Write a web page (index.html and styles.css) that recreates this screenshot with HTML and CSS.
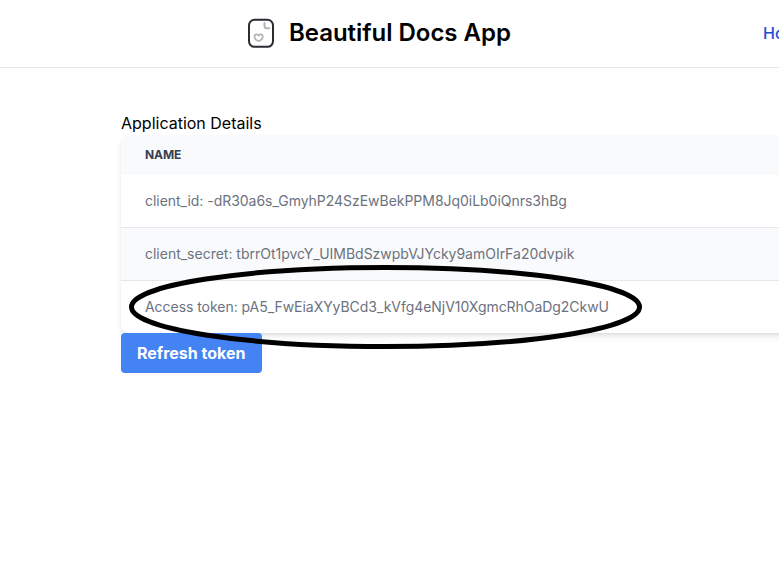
FILE: index.html
```html
<!DOCTYPE html>
<html lang="en">
<head>
<meta charset="utf-8">
<title>Beautiful Docs App</title>
<link rel="stylesheet" href="styles.css">
</head>
<body>
<header class="header">
  <a class="brand">
    <svg class="logo" viewBox="0 0 28 30" fill="none" stroke-linecap="round" stroke-linejoin="round">
      <rect x="2" y="1.800" width="24" height="27" rx="5.500" stroke="#292d32" stroke-width="2"/>
      <path d="M17.500 5v2.700c0 1.600.9 2.500 2.500 2.500h2.200" stroke="#b4b5b7" stroke-width="2"/>
      <path d="M11.600 23.200c-1.800-.7-4.100-2.300-4.100-4.500 0-1.400.9-2.300 2-2.300.9 0 1.600.4 2.100 1.100.5-.7 1.200-1.100 2.100-1.100 1.100 0 2 .9 2 2.300 0 2.200-2.300 3.800-4.100 4.500z" stroke="#b4b5b7" stroke-width="1.800"/>
    </svg>
    <span class="brand-name">Beautiful Docs App</span>
  </a>
  <nav class="nav"><a class="nav-link">Home</a></nav>
</header>
<main class="content">
  <div class="title">Application Details</div>
  <table class="details">
    <thead><tr><th>Name</th></tr></thead>
    <tbody>
      <tr><td><span class="t-id">client_id: -dR30a6s_GmyhP24SzEwBekPPM8Jq0iLb0iQnrs3hBg</span></td></tr>
      <tr><td><span class="t-secret">client_secret: tbrrOt1pvcY_UIMBdSzwpbVJYcky9amOIrFa20dvpik</span></td></tr>
      <tr><td><span class="t-token">Access token: pA5_FwEiaXYyBCd3_kVfg4eNjV10XgmcRhOaDg2CkwU</span></td></tr>
    </tbody>
  </table>
  <button class="refresh">Refresh token</button>
  <svg class="highlight" viewBox="0 0 516 88" fill="none">
    <ellipse cx="257.500" cy="44" rx="254" ry="39.500" stroke="#000" stroke-width="5"/>
  </svg>
</main>
</body>
</html>
```
FILE: styles.css
```css
* { box-sizing: border-box; }
html { overflow: hidden; }
body {
  margin: 0;
  height: 572px;
  overflow: hidden;
  background: #fff;
  color: #000;
  font: 16px/24px Inter, "Liberation Sans", sans-serif;
}
.header {
  display: flex;
  align-items: center;
  justify-content: space-between;
  height: 68px;
  width: 812px;
  padding: 0 0 2px 247px;
  border-bottom: 1px solid #e5e7eb;
}
.brand { display: flex; align-items: center; gap: 14px; }
.logo { width: 28px; height: 30px; }
.brand-name { font-size: 24px; line-height: 32px; font-weight: 600; letter-spacing: -0.03px; white-space: nowrap; }
.nav { width: 49px; }
.nav-link { color: #1d4ed8; font-weight: 500; }
.content {
  position: relative;
  width: 900px;
  padding: 43px 0 0 121px;
}
.title { line-height: 24px; }
.details {
  width: 100%;
  border-spacing: 0;
  border-radius: 8px;
  overflow: hidden;
  background: #fff;
  text-align: left;
  font-size: 14px;
  line-height: 20px;
  color: #6b7280;
  box-shadow: 0 4px 6px -1px rgba(0, 0, 0, .1), 0 2px 4px -2px rgba(0, 0, 0, .1);
}
.t-id { letter-spacing: -0.03px; }
.t-secret { letter-spacing: -0.01px; }
.t-token { letter-spacing: -0.045px; }
th {
  height: 40px;
  padding: 0 24px;
  background: #f9fafb;
  color: #374151;
  font-size: 12px;
  line-height: 16px;
  font-weight: 700;
  letter-spacing: -0.1px;
  text-transform: uppercase;
}
td { height: 53px; padding: 0 24px; border-bottom: 1px solid #e5e7eb; white-space: nowrap; }
tbody tr:nth-child(even) { background: #f9fafb; }
tbody tr:last-child td { height: 52px; border-bottom: 0; }
.refresh {
  display: block;
  position: relative;
  height: 40px;
  padding: 8px 16px;
  border: 0;
  border-radius: 4px;
  background: #4483f4;
  color: #fff;
  font: 700 16px/24px Inter, "Liberation Sans", sans-serif;
}
.highlight {
  position: absolute;
  left: 128px;
  top: 195px;
  width: 516px;
  height: 88px;
}
```
